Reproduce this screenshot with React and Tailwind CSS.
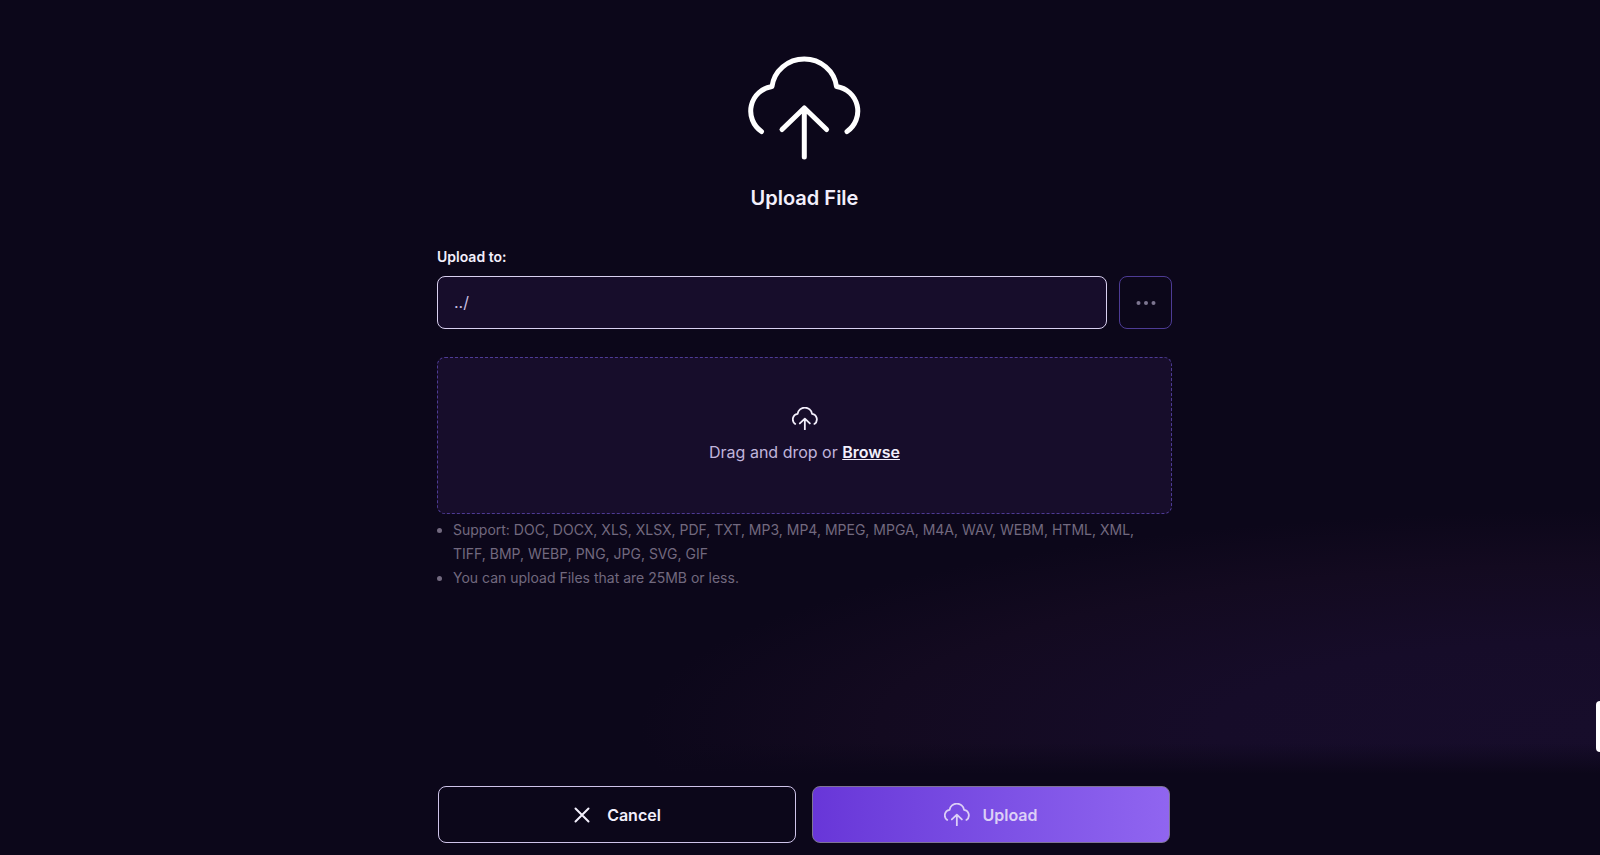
import React from "react";

function CloudUpload({ className, strokeWidth }) {
  return (
    <svg
      viewBox="0 0 116 104"
      fill="none"
      stroke="currentColor"
      strokeWidth={strokeWidth}
      strokeLinecap="round"
      strokeLinejoin="round"
      className={className}
      aria-hidden="true"
    >
      <path d="M14.5 75.5A24.8 24.8 0 0 1 25 30.5A32.5 31.5 0 0 1 89.5 30.5A24.8 24.8 0 0 1 100 75.5" />
      <path d="M57.3 101V52M35 73.5L57.3 52L79.6 73.5" />
    </svg>
  );
}

export default function App() {
  return (
    <div className="relative flex min-h-screen flex-col overflow-hidden bg-[#0c071a] font-['Inter',sans-serif] text-[#f3effc]">
      <main className="flex flex-1 flex-col items-center bg-[linear-gradient(to_bottom,transparent_96%,#0c071a_100%),radial-gradient(ellipse_60%_28%_at_100%_94%,#170d2b_0%,#160c29_40%,#130a20_75%,#0c071a_100%)] pt-14 pl-[9px]">
        <CloudUpload className="w-[116px] text-white" strokeWidth={5} />
        <h1 className="mt-6 text-xl leading-7 font-semibold">Upload File</h1>

        <form className="mt-8 w-full max-w-[735px]">
          <label htmlFor="destination" className="block pt-px text-sm leading-6 font-semibold">
            Upload to:
          </label>
          <div className="mt-[7px] flex gap-3">
            <input
              id="destination"
              type="text"
              defaultValue="../"
              className="h-[53px] min-w-0 flex-1 rounded-lg border border-[#d9d0f0] bg-[#170d2b] px-4 pb-0.5 text-base text-[#c9bfe2] outline-none"
            />
            <button
              type="button"
              aria-label="Choose folder"
              className="flex size-[53px] items-center justify-center rounded-lg border border-[#4d3b94] text-[#7d7590]"
            >
              <svg viewBox="0 0 20 4" className="w-5" fill="currentColor" aria-hidden="true">
                <circle cx="2.5" cy="2" r="2" />
                <circle cx="10" cy="2" r="2" />
                <circle cx="17.5" cy="2" r="2" />
              </svg>
            </button>
          </div>

          <div className="mt-7 flex h-[157px] flex-col items-center justify-center rounded-lg border border-dashed border-[#4d3b94] bg-[#170d2b] pt-0.5">
            <CloudUpload className="w-[26px]" strokeWidth={8} />
            <p className="mt-2 text-base leading-7 text-[#c0b5dc]">
              Drag and drop or{" "}
              <button type="button" className="font-semibold text-[#f3effc] underline">
                Browse
              </button>
            </p>
          </div>

          <ul className="list-disc pt-1 pr-4 pl-4 text-sm leading-6 text-[#72697f]">
            <li>
              Support: DOC, DOCX, XLS, XLSX, PDF, TXT, MP3, MP4, MPEG, MPGA, M4A, WAV, WEBM, HTML, XML, TIFF, BMP,
              WEBP, PNG, JPG, SVG, GIF
            </li>
            <li>You can upload Files that are 25MB or less.</li>
          </ul>
        </form>
      </main>

      <footer className="flex justify-center pt-3 pb-3 pl-2">
        <div className="grid w-full max-w-[732px] grid-cols-2 gap-4">
          <button
            type="button"
            className="flex h-[57px] items-center justify-center gap-4 rounded-lg border border-[#cfc4ea] text-base font-semibold"
          >
            <svg
              viewBox="0 0 18 18"
              className="size-[18px]"
              fill="none"
              stroke="currentColor"
              strokeWidth="2"
              strokeLinecap="round"
              aria-hidden="true"
            >
              <path d="M2.5 2.5L15.5 15.5M15.5 2.5L2.5 15.5" />
            </svg>
            Cancel
          </button>
          <button
            type="button"
            className="flex h-[57px] items-center justify-center gap-3 rounded-lg border border-[#7f7496] bg-linear-to-r from-[#6836d8] to-[#9065f0] text-base font-semibold text-[#dccff6]"
          >
            <CloudUpload className="w-[26px]" strokeWidth={8} />
            Upload
          </button>
        </div>
      </footer>

      <div className="absolute top-[701px] right-0 h-[51px] w-1 rounded-l-sm bg-white" />
    </div>
  );
}
